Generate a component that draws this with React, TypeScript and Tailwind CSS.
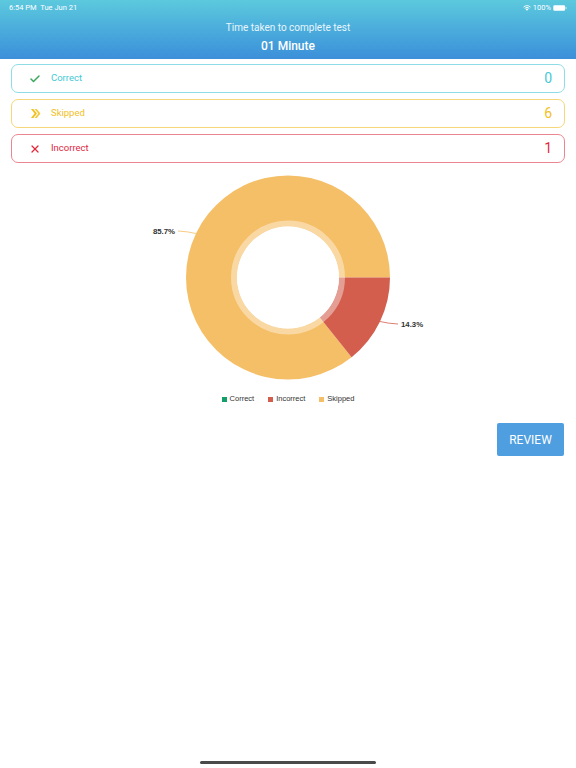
import React from "react";
import { Check, X } from "lucide-react";

function DoubleChevron() {
  return (
    <svg width="11" height="11" viewBox="0 0 12 12" className="text-[#f2c01f]">
      <path d="M1 1 L3.6 1 L7.6 6 L3.6 11 L1 11 L5 6 Z" fill="currentColor" />
      <path d="M5 1 L7.4 1 L11.4 6 L7.4 11 L5 11 L9 6 Z" fill="currentColor" opacity="0.85" />
    </svg>
  );
}

const cards = [
  {
    label: "Correct",
    value: "0",
    border: "border-[#8edde6]",
    text: "text-[#45c9d6]",
    icon: <Check size={12} strokeWidth={3} className="text-[#3aa85a]" />,
  },
  {
    label: "Skipped",
    value: "6",
    border: "border-[#f6d77a]",
    text: "text-[#f2c01f]",
    icon: <DoubleChevron />,
  },
  {
    label: "Incorrect",
    value: "1",
    border: "border-[#ec8592]",
    text: "text-[#e0283f]",
    icon: <X size={12} strokeWidth={2.5} className="text-[#e0283f]" />,
  },
];

function StatusBar() {
  return (
    <div className="flex h-[14px] items-center justify-between px-[9px] text-[7.5px] text-white">
      <span>6:54 PM&nbsp;&nbsp;Tue Jun 21</span>
      <div className="flex items-center gap-[2px]">
        <svg width="8" height="6" viewBox="0 0 16 12">
          <path d="M8 11.5 L5.2 8.6 A4 4 0 0 1 10.8 8.6 Z" fill="white" />
          <path d="M3.4 6.8 A6.6 6.6 0 0 1 12.6 6.8" stroke="white" strokeWidth="1.8" fill="none" />
          <path d="M1 4.2 A10 10 0 0 1 15 4.2" stroke="white" strokeWidth="1.8" fill="none" />
        </svg>
        <span>100%</span>
        <svg width="14" height="6" viewBox="0 0 14 6">
          <rect x="0.3" y="0.3" width="11.8" height="5.4" rx="1.2" fill="white" />
          <rect x="12.5" y="2" width="1.2" height="2" rx="0.5" fill="white" opacity="0.6" />
        </svg>
      </div>
    </div>
  );
}

function Donut() {
  // center at (150, 107.5)
  return (
    <svg width="300" height="215" viewBox="0 0 300 215" className="mx-auto block">
      <g transform="translate(150 107.5)">
        <path
          d="M102 0 A102 102 0 1 0 63.6 79.7 L31.8 39.9 A51 51 0 1 1 51 0 Z"
          fill="#f5bf67"
        />
        <path d="M102 0 A102 102 0 0 1 63.6 79.7 L31.8 39.9 A51 51 0 0 0 51 0 Z" fill="#d35e4e" />
        <circle r="54" fill="none" stroke="white" strokeOpacity="0.4" strokeWidth="6" />
        <circle r="51" fill="white" />
        <path d="M-92 -44 Q -100 -46 -110 -46.5" stroke="#f5bf67" strokeWidth="0.8" fill="none" />
        <path d="M92 44 Q 100 46 110 46.5" stroke="#d35e4e" strokeWidth="0.8" fill="none" />
        <text
          x="-113"
          y="-43.5"
          textAnchor="end"
          fontSize="7.8"
          fontWeight="bold"
          fill="#333"
          fontFamily="'Liberation Sans', Arial, sans-serif"
        >
          85.7%
        </text>
        <text
          x="113"
          y="49.5"
          textAnchor="start"
          fontSize="7.8"
          fontWeight="bold"
          fill="#333"
          fontFamily="'Liberation Sans', Arial, sans-serif"
        >
          14.3%
        </text>
      </g>
    </svg>
  );
}

function Legend() {
  const items = [
    { label: "Correct", color: "bg-[#149e6a]" },
    { label: "Incorrect", color: "bg-[#d35e4e]" },
    { label: "Skipped", color: "bg-[#f5bf67]" },
  ];
  return (
    <div className="mt-[9px] flex h-[10px] items-center justify-center gap-[14px] font-['Liberation_Sans',Arial,sans-serif] text-[7.5px] text-[#333]">
      {items.map((i) => (
        <div key={i.label} className="flex items-center gap-[3px]">
          <span className={`h-[5px] w-[5px] ${i.color}`} />
          <span>{i.label}</span>
        </div>
      ))}
    </div>
  );
}

export default function App() {
  return (
    <div className="relative flex h-[768px] w-[576px] flex-col overflow-hidden bg-white font-['Roboto',sans-serif]">
      <div className="h-[59px] bg-gradient-to-b from-[#5cc9dd] to-[#3c8fd9] pt-[1px]">
        <StatusBar />
        <div className="mt-[7px] text-center text-[10px] leading-[12px] text-[#e8f6fb]">
          Time taken to complete test
        </div>
        <div className="mt-[5px] text-center text-[12px] font-medium leading-[14px] text-white">
          01 Minute
        </div>
      </div>

      <div className="flex flex-col gap-[6px] px-[11px] pt-[5px]">
        {cards.map((c) => (
          <div
            key={c.label}
            className={`flex h-[29px] items-center rounded-[7px] border bg-white pl-[17px] pr-[12px] ${c.border}`}
          >
            <span className="flex w-[12px] justify-center">{c.icon}</span>
            <span className={`ml-[10px] text-[9.5px] ${c.text}`}>{c.label}</span>
            <span className={`ml-auto text-[14px] ${c.text}`}>{c.value}</span>
          </div>
        ))}
      </div>

      <div className="mt-[7px]">
        <Donut />
      </div>
      <Legend />

      <div className="mt-[19px] flex justify-end pr-[12px]">
        <button className="h-[33px] w-[67px] rounded-[2px] bg-[#4e9ee0] text-[12px] text-white">
          REVIEW
        </button>
      </div>

      <div className="absolute bottom-[4px] left-[200px] h-[3px] w-[176px] rounded-full bg-[#4a4a4a]" />
    </div>
  );
}
